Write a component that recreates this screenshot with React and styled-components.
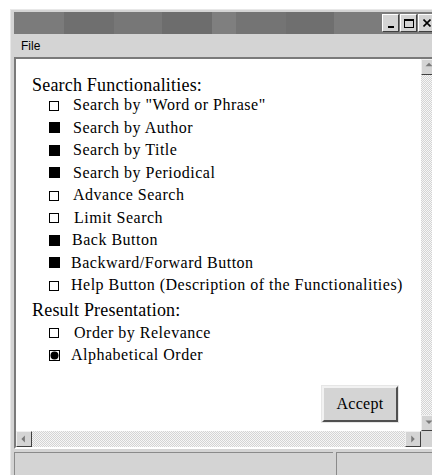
import React from "react";
import styled, { createGlobalStyle } from "styled-components";

const Global = createGlobalStyle`
  html, body { margin: 0; padding: 0; background: #ffffff; overflow: hidden; }
  body { width: 432px; height: 475px; }
`;

const Window = styled.div`
  margin: 9px 0 0 10px;
  width: 430px;
  height: 466px;
  box-sizing: border-box;
  background: #d4d4d4;
  border-top: 1px solid #e8e8e8;
  border-left: 1px solid #e8e8e8;
  padding: 2px 3px 0 3px;
  display: flex;
  flex-direction: column;
`;

const TitleBar = styled.div`
  height: 22px;
  flex: none;
  display: flex;
  align-items: center;
  justify-content: flex-end;
  padding-right: 2px;
  background: linear-gradient(
    to right,
    #7b7b7b 0 50px,
    #6f6f6f 50px 100px,
    #777777 100px 148px,
    #6d6d6d 148px 198px,
    #7f7f7f 198px 222px,
    #747474 222px 272px,
    #6f6f6f 272px 320px,
    #7c7c7c 320px 100%
  );
`;

const CaptionButton = styled.div`
  width: 17px;
  height: 18px;
  margin-left: 1px;
  box-sizing: border-box;
  background: #d4d4d4;
  border: 1px solid;
  border-color: #ffffff #404040 #404040 #ffffff;
  display: flex;
  align-items: center;
  justify-content: center;
  flex: none;
`;

const MenuBar = styled.div`
  height: 23px;
  flex: none;
  display: flex;
  align-items: center;
  padding-left: 7px;
  font-family: "Liberation Sans", Arial, sans-serif;
  font-size: 12px;
  color: #000;
`;

const Pane = styled.div`
  flex: none;
  height: 392px;
  box-sizing: border-box;
  border: 2px solid;
  border-color: #7a7a7a #ffffff #ffffff #7a7a7a;
  border-right: none;
  display: grid;
  grid-template-columns: 1fr 16px;
  grid-template-rows: 1fr 16px;
  background: #ffffff;
`;

const Content = styled.div`
  padding: 17px 0 0 16px;
  font-family: "Liberation Serif", "Times New Roman", serif;
  color: #000;
  display: flex;
  flex-direction: column;
`;

const Heading = styled.div`
  font-size: 18px;
  line-height: 18px;
  letter-spacing: 0.2px;
  margin-top: ${(p) => p.$top || 0}px;
  margin-bottom: ${(p) => p.$gap || 0}px;
`;

const List = styled.div`
  display: flex;
  flex-direction: column;
  padding-left: 17px;
`;

const Row = styled.div`
  display: flex;
  align-items: center;
  height: 22.5px;
  font-size: 16px;
  letter-spacing: 0.5px;
  white-space: nowrap;
`;

const Mark = styled.span`
  width: 23px;
  flex: none;
  display: flex;
  align-items: center;
`;

const Label = styled.span`
  margin-left: ${(p) => p.$shift || 0}px;
`;

const Footer = styled.div`
  display: flex;
  justify-content: flex-end;
  padding-right: 23px;
  margin-top: 19px;
`;

const AcceptButton = styled.button`
  width: 76px;
  height: 36px;
  box-sizing: border-box;
  background: #d4d4d4;
  border: 2px solid;
  border-color: #f2f2f2 #505050 #505050 #f2f2f2;
  outline: 1px solid #e6e6e6;
  font-family: "Liberation Serif", "Times New Roman", serif;
  font-size: 16px;
  letter-spacing: 0.3px;
  color: #000;
  padding: 0;
`;

const Track = styled.div`
  background-color: #ffffff;
  background-image: repeating-conic-gradient(#d4d4d4 0 25%, #f6f6f6 0 50%);
  background-size: 2px 2px;
  display: flex;
  flex-direction: ${(p) => (p.$vertical ? "column" : "row")};
  justify-content: space-between;
`;

const ArrowButton = styled.div`
  width: 16px;
  height: 16px;
  box-sizing: border-box;
  background: #d4d4d4;
  border: 1px solid;
  border-color: #f0f0f0 #404040 #404040 #f0f0f0;
  display: flex;
  align-items: center;
  justify-content: center;
  flex: none;
`;

const Corner = styled.div`
  background: #d4d4d4;
`;

const StatusBar = styled.div`
  flex: 1;
  display: flex;
  gap: 3px;
  padding-top: 3px;
`;

const StatusPanel = styled.div`
  width: ${(p) => p.$w}px;
  flex: none;
  box-sizing: border-box;
  border-top: 1px solid #8a8a8a;
  border-left: 1px solid #8a8a8a;
`;

const Square = ({ filled }) => (
  <svg width="11" height="11" viewBox="0 0 11 11">
    {filled ? (
      <rect x="0" y="0" width="11" height="11" fill="#000" />
    ) : (
      <rect x="0.5" y="1.5" width="9" height="9" fill="#fff" stroke="#000" />
    )}
  </svg>
);

const RadioMark = () => (
  <svg width="11" height="11" viewBox="0 0 11 11">
    <rect x="0.5" y="0.5" width="10" height="10" fill="#fff" stroke="#000" />
    <circle cx="5.5" cy="5.5" r="4" fill="#000" />
  </svg>
);

const Arrow = ({ dir }) => {
  const pts = {
    up: "4,7 8,3 12,7",
    down: "4,5 8,9 12,5",
    left: "9,4 5,8 9,12",
    right: "6,4 10,8 6,12",
  }[dir];
  return (
    <svg width="14" height="14" viewBox="0 0 16 16">
      <polygon points={pts} fill="#7a7a7a" />
    </svg>
  );
};

const searchItems = [
  { text: 'Search by "Word or Phrase"', filled: false, shift: 1 },
  { text: "Search by Author", filled: true, shift: 1 },
  { text: "Search by Title", filled: true, shift: 1 },
  { text: "Search by Periodical", filled: true, shift: 1 },
  { text: "Advance Search", filled: false, shift: 1 },
  { text: "Limit Search", filled: false, shift: 2 },
  { text: "Back Button", filled: true, shift: 0 },
  { text: "Backward/Forward Button", filled: true, shift: -1 },
  { text: "Help Button (Description of the Functionalities)", filled: false, shift: -1 },
];

export default function App() {
  return (
    <>
      <Global />
      <Window>
        <TitleBar>
          <CaptionButton>
            <svg width="8" height="9" viewBox="0 0 8 9">
              <rect x="1" y="7" width="6" height="2" fill="#000" />
            </svg>
          </CaptionButton>
          <CaptionButton>
            <svg width="10" height="9" viewBox="0 0 10 9">
              <rect x="0.5" y="0.5" width="9" height="8" fill="none" stroke="#000" />
              <rect x="0" y="0" width="10" height="2" fill="#000" />
            </svg>
          </CaptionButton>
          <CaptionButton>
            <svg width="8" height="8" viewBox="0 0 8 8">
              <path d="M0.5 0.5 L7.5 7.5 M7.5 0.5 L0.5 7.5" stroke="#000" strokeWidth="1.6" />
            </svg>
          </CaptionButton>
        </TitleBar>
        <MenuBar>File</MenuBar>
        <Pane>
          <Content>
            <Heading>Search Functionalities:</Heading>
            <List>
              {searchItems.map((it) => (
                <Row key={it.text}>
                  <Mark>
                    <Square filled={it.filled} />
                  </Mark>
                  <Label $shift={it.shift}>{it.text}</Label>
                </Row>
              ))}
            </List>
            <Heading $top={4} $gap={3}>Result Presentation:</Heading>
            <List>
              <Row>
                <Mark>
                  <Square filled={false} />
                </Mark>
                <Label $shift={2}>Order by Relevance</Label>
              </Row>
              <Row>
                <Mark>
                  <RadioMark />
                </Mark>
                <Label $shift={-1}>Alphabetical Order</Label>
              </Row>
            </List>
            <Footer>
              <AcceptButton>Accept</AcceptButton>
            </Footer>
          </Content>
          <Track $vertical>
            <ArrowButton>
              <Arrow dir="up" />
            </ArrowButton>
            <ArrowButton>
              <Arrow dir="down" />
            </ArrowButton>
          </Track>
          <Track>
            <ArrowButton>
              <Arrow dir="left" />
            </ArrowButton>
            <ArrowButton>
              <Arrow dir="right" />
            </ArrowButton>
          </Track>
          <Corner />
        </Pane>
        <StatusBar>
          <StatusPanel $w={319} />
          <StatusPanel $w={100} />
        </StatusBar>
      </Window>
    </>
  );
}
